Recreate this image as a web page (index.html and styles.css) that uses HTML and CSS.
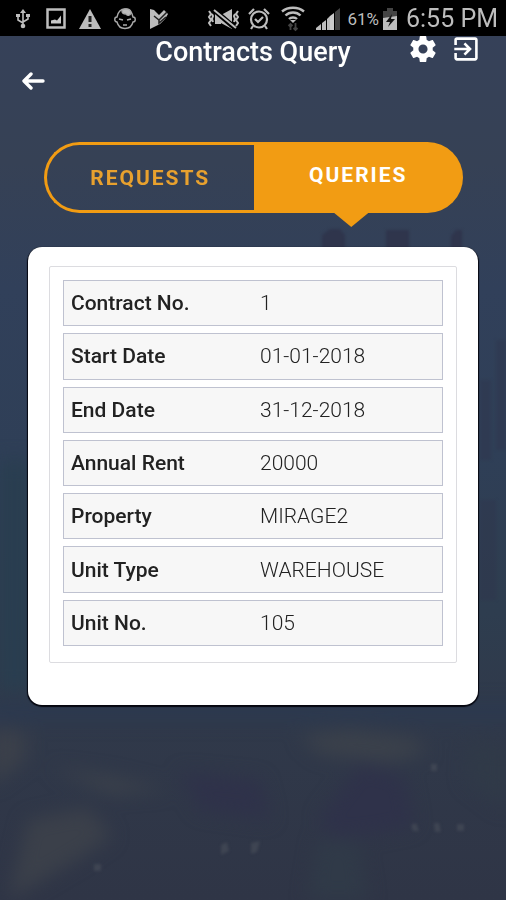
FILE: index.html
```html
<!DOCTYPE html>
<html lang="en">
<head>
<meta charset="utf-8">
<meta name="viewport" content="width=device-width, initial-scale=1">
<title>Contracts Query</title>
<link rel="stylesheet" href="styles.css">
</head>
<body>
<svg class="backdrop" viewBox="0 0 506 900" preserveAspectRatio="none" aria-hidden="true">
  <defs>
    <linearGradient id="sky" x1="0" y1="0" x2="0" y2="1">
      <stop offset="0" stop-color="#36415a"/>
      <stop offset=".18" stop-color="#364155"/>
      <stop offset=".32" stop-color="#31405a"/>
      <stop offset=".5" stop-color="#2f3f57"/>
      <stop offset=".68" stop-color="#2e3d4f"/>
      <stop offset=".8" stop-color="#30394a"/>
      <stop offset="1" stop-color="#2f3546"/>
    </linearGradient>
    <filter id="haze" x="-20%" y="-20%" width="140%" height="140%" color-interpolation-filters="sRGB"><feGaussianBlur stdDeviation="9"/></filter>
    <filter id="soft" color-interpolation-filters="sRGB"><feGaussianBlur stdDeviation="1.500"/></filter>
  </defs>
  <rect width="506" height="900" fill="url(#sky)"/>
  <g filter="url(#soft)" fill="#2f354c">
    <path d="M322 235l8-6h10l5 6v22h-23zM386 230h23v27h-23zM451 236l5-6h6v27h-11z"/>
    <path d="M480 380h11v80h-11zM496 340h10v110h-10zM480 500h16v100h-16z" opacity=".4"/>
  </g>
  <g filter="url(#haze)">
    <path d="M0 460h29v230H0z" fill="#293e50"/>
    <path d="M-20 704h546v16H-20z" fill="#2b3950"/>
    <path d="M-10 728l36 4v28L-10 786zM28 820l60-12 24 28-26 18-78 46z" fill="#3b404a"/>
    <path d="M50 768l60 8 60 14-60 4zM300 736l50-6 64 8 14 14-38 10-70-8z" fill="#3b414b"/>
    <path d="M180 772l80 8 10 40-70-10zM360 764l44 12 10 50-40 8-44 4-10-20z" fill="#2f324a"/>
    <path d="M318 840h40l10 60h-60zM470 740l36 10v60l-40-30z" fill="#303a48"/>
  </g>
  <g filter="url(#soft)" fill="#464c58" opacity=".7">
    <path d="M221 845l6-3 2 9-8 4zM251 843l9-2-3 11-6 2zM411 825l5-2 3 8h-6zM434 823h5l2 9h-6zM457 824h7v7h-7zM94 864h7v7h-7zM431 764h6v7h-6z"/>
  </g>
</svg>

<div class="status">
  <div class="status-left">
    <svg width="20" height="22" viewBox="0 0 20 22" fill="none" stroke="#bdbdbd" stroke-width="1.600" aria-hidden="true"><path d="M9 18V4M9 15l-5-3V8M9 14l5-3V8"/><path d="M9 1l3 4H6z" fill="#bdbdbd" stroke="none"/><circle cx="9" cy="18" r="2.300" fill="#bdbdbd" stroke="none"/><path d="M2 6h4v3H2zM12 6h4v3h-4z" fill="#bdbdbd" stroke="none"/></svg>
    <svg width="20" height="22" viewBox="0 0 20 22" aria-hidden="true"><path d="M1.500 1.500h17v18h-17z" fill="none" stroke="#bdbdbd" stroke-width="2.500"/><path d="M5 15.500v-3l4-1 2 1 4-5v8z" fill="#c8c8c8"/></svg>
    <svg width="24" height="22" viewBox="0 0 24 22" aria-hidden="true"><path d="M12 1l11 20H1z" fill="#bdbdbd"/><path d="M12 8v6M12 16v3" stroke="#222" stroke-width="3"/></svg>
    <svg width="24" height="22" viewBox="0 0 24 22" fill="none" stroke="#aaa" stroke-width="1.400" aria-hidden="true"><path d="M3 9C4 4 7 1 11 1s7 3 8 8c3 0 3 5 0 5-1 4-4 6.500-8 6.500S4 18 3 14C0 14 0 9 3 9z"/><path d="M8 3c1-3 9-3 9 2-1 3-4 3-5 1-2 0-4-1-4-3z" fill="#bdbdbd"/><path d="M5 11l4 1M13 12l4-1M9 17h4"/></svg>
    <svg width="18" height="22" viewBox="0 0 18 22" aria-hidden="true"><path d="M0 1l4 1 5 5 5-5 4 4-3 5-5 5-10 5z" fill="#bdbdbd"/><path d="M4 8l5 4 8-8M9 12v3l7-6" fill="none" stroke="#222" stroke-width="1.500"/></svg>
  </div>
  <div class="status-right">
    <svg width="34" height="22" viewBox="0 0 34 22" fill="#bdbdbd" aria-hidden="true"><path d="M8 6h6v10H8zM14 7l11-6v20l-11-6z"/><path d="M6 1l22 19" stroke="#000" stroke-width="5"/><path d="M7 2l22 18M2 3l2 3-2 3 2 3-2 3 2 3M5 6l1 2-1 3 1 3M31 3l-2 3 2 3-2 3 2 3-2 3M28 6l-1 2 1 3-1 3" fill="none" stroke="#bdbdbd" stroke-width="2"/></svg>
    <svg width="22" height="22" viewBox="0 0 22 22" fill="none" stroke="#bdbdbd" stroke-width="2.200" aria-hidden="true"><circle cx="11" cy="11.500" r="8"/><path d="M1 6l5-5M16 1l5 5M5 18l-2 3M17 18l2 3M7 11l3 3 5-5"/></svg>
    <svg width="32" height="26" viewBox="0 0 32 26" fill="none" stroke="#bdbdbd" stroke-width="2.400" aria-hidden="true"><path d="M5 5.500c6-5 16-5 22 0M8.500 9.500c4-4 11-4 15 0M12 13c2-2 6-2 8 0"/><path d="M16 17l-3-3h6z" fill="#bdbdbd" stroke="none"/><path d="M13.500 24v-6M11.500 20l2-2 2 2M18.500 17v7M16.500 22l2 2 2-2" stroke="#444" stroke-width="1.800"/></svg>
    <svg width="24" height="24" viewBox="0 0 24 24" fill="#bdbdbd" aria-hidden="true"><path d="M0 23v-2l5-4v6zM6 23v-7l4-3v10zM11 23V12l3-3v14z"/><path d="M14 23V9l4-3v17z" fill="#ccc"/><path d="M19 23V5l5-4v22z" fill="#444"/></svg>
    <span class="battery"><span>61%</span>
      <svg width="14" height="22" viewBox="0 0 14 22" aria-hidden="true"><path d="M4 0h6v3h4v8H0V3h4z" fill="#444"/><path d="M0 10l14-2v14H0z" fill="#bdbdbd"/><path d="M9 6l-6 8h4l-2 5 7-8H8z" fill="#111"/></svg>
    </span>
    <time class="clock">6:55 PM</time>
  </div>
</div>

<header class="header">
  <button class="icon-button back" type="button" aria-label="Back">
    <svg width="24" height="20" viewBox="0 0 24 20" fill="none" stroke="#fff" stroke-width="3.400" stroke-linecap="round" stroke-linejoin="round" aria-hidden="true"><path d="M9 3l-7 7 7 7M3 10h18"/></svg>
  </button>
  <h1 class="title">Contracts Query</h1>
  <div class="actions">
    <button class="icon-button" type="button" aria-label="Settings">
      <svg width="26" height="26" viewBox="2 2 20 20" fill="#fff" aria-hidden="true"><path d="M19.430 12.980c.04-.32.07-.64.07-.98s-.03-.66-.07-.98l2.110-1.650c.19-.15.24-.42.12-.64l-2-3.460c-.12-.22-.39-.3-.61-.22l-2.490 1c-.52-.4-1.080-.73-1.690-.98l-.38-2.650C14.460 2.180 14.250 2 14 2h-4c-.25 0-.46.18-.49.42l-.38 2.650c-.61.25-1.170.59-1.690.98l-2.490-1c-.23-.09-.49 0-.61.22l-2 3.460c-.13.22-.07.49.12.64l2.110 1.650c-.04.32-.07.65-.07.98s.03.66.07.98l-2.110 1.650c-.19.15-.24.42-.12.64l2 3.460c.12.22.39.3.61.22l2.490-1c.52.4 1.080.73 1.690.98l.38 2.650c.03.24.24.42.49.42h4c.25 0 .46-.18.49-.42l.38-2.650c.61-.25 1.170-.59 1.690-.98l2.490 1c.23.09.49 0 .61-.22l2-3.460c.12-.22.07-.49-.12-.64zM12 15.500c-1.930 0-3.500-1.570-3.500-3.500s1.570-3.500 3.500-3.500 3.500 1.570 3.500 3.500-1.570 3.500-3.500 3.500z"/></svg>
    </button>
    <button class="icon-button" type="button" aria-label="Log out">
      <svg width="26" height="26" viewBox="2 2 20 20" fill="#fff" aria-hidden="true"><path d="M10.090 15.590L11.500 17l5-5-5-5-1.410 1.410L12.670 11H3v2h9.670zM19 3H5c-1.110 0-2 .9-2 2v4h2V5h14v14H5v-4H3v4c0 1.100.89 2 2 2h14c1.100 0 2-.9 2-2V5c0-1.100-.9-2-2-2z"/></svg>
    </button>
  </div>
</header>

<main class="main">
  <nav class="tabs">
    <button class="tab" type="button">REQUESTS</button>
    <button class="tab tab-active" type="button" aria-current="page">QUERIES</button>
  </nav>
  <section class="card">
    <div class="panel">
      <table class="details">
        <tbody>
          <tr><th scope="row">Contract No.</th><td>1</td></tr>
          <tr><th scope="row">Start Date</th><td>01-01-2018</td></tr>
          <tr><th scope="row">End Date</th><td>31-12-2018</td></tr>
          <tr><th scope="row">Annual Rent</th><td>20000</td></tr>
          <tr><th scope="row">Property</th><td>MIRAGE2</td></tr>
          <tr><th scope="row">Unit Type</th><td>WAREHOUSE</td></tr>
          <tr><th scope="row">Unit No.</th><td>105</td></tr>
        </tbody>
      </table>
    </div>
  </section>
</main>
</body>
</html>
```
FILE: styles.css
```css
* {
  box-sizing: border-box;
}

body {
  margin: 0;
  min-height: 100vh;
  background: #313d50;
  font-family: Roboto, "Liberation Sans", sans-serif;
}

svg {
  display: block;
  flex: none;
}

.backdrop {
  position: fixed;
  inset: 0;
  width: 100%;
  height: 100%;
  z-index: -1;
}

.status {
  display: flex;
  justify-content: space-between;
  align-items: center;
  height: 36px;
  padding: 2px 8px 0 14px;
  background: #000;
  color: #bdbdbd;
}

.status-left {
  display: flex;
  gap: 12px;
}

.status-right {
  display: flex;
  align-items: center;
  gap: 7px;
}

.battery {
  display: flex;
  align-items: center;
  gap: 4px;
  margin-right: 2px;
  font-size: 17px;
}

.clock {
  font-size: 25px;
  line-height: 32px;
}

.header {
  display: grid;
  grid-template-columns: 1fr auto 1fr;
  align-items: start;
  height: 64px;
  padding: 0 27px 0 22px;
}

.title {
  margin: 0;
  padding-left: 5px;
  color: #fff;
  font-size: 27px;
  font-weight: 500;
  line-height: 32px;
}

.icon-button {
  padding: 0;
  border: 0;
  background: none;
}

.back {
  justify-self: start;
  margin-top: 35px;
}

.actions {
  display: flex;
  justify-content: flex-end;
  gap: 17px;
}

.main {
  padding: 42px 28px 24px;
}

.tabs {
  display: grid;
  grid-template-columns: 1fr 1fr;
  height: 71px;
  margin: 0 15px 34px 16px;
}

.tab {
  padding: 0;
  border: 3px solid #f29c13;
  border-right: 0;
  border-radius: 36px 0 0 36px;
  background: none;
  color: #e8a12e;
  font: 700 21px/26px Roboto, "Liberation Sans", sans-serif;
  letter-spacing: 2px;
}

.tab-active {
  position: relative;
  padding-bottom: 6px;
  border: 0;
  border-radius: 0 36px 36px 0;
  background: #f29c13;
  color: #fff;
}

.tab-active::after {
  content: "";
  position: absolute;
  top: 100%;
  left: 50%;
  width: 34px;
  height: 14px;
  margin-left: -24px;
  background: #f29c13;
  clip-path: polygon(0 0, 100% 0, 50% 100%);
}

.card {
  padding: 19px 21px 42px;
  border-radius: 14px;
  background: #fff;
  box-shadow: 0 1px 1px 1px #05060f;
}

.panel {
  padding: 6px 13px 9px;
  border: 1px solid #dcdce0;
  border-radius: 2px;
}

.details {
  width: 100%;
  height: 380px;
  border-spacing: 0 7px;
  table-layout: fixed;
  color: #222;
  font-size: 21px;
  line-height: 26px;
}

.details th,
.details td {
  padding: 0 7px;
  border: 1px solid #bfc2d0;
  background: #f7f7f7;
  text-align: left;
}

.details th {
  border-right: 0;
  font-weight: 500;
}

.details td {
  border-left: 0;
  font-weight: 300;
}
```
